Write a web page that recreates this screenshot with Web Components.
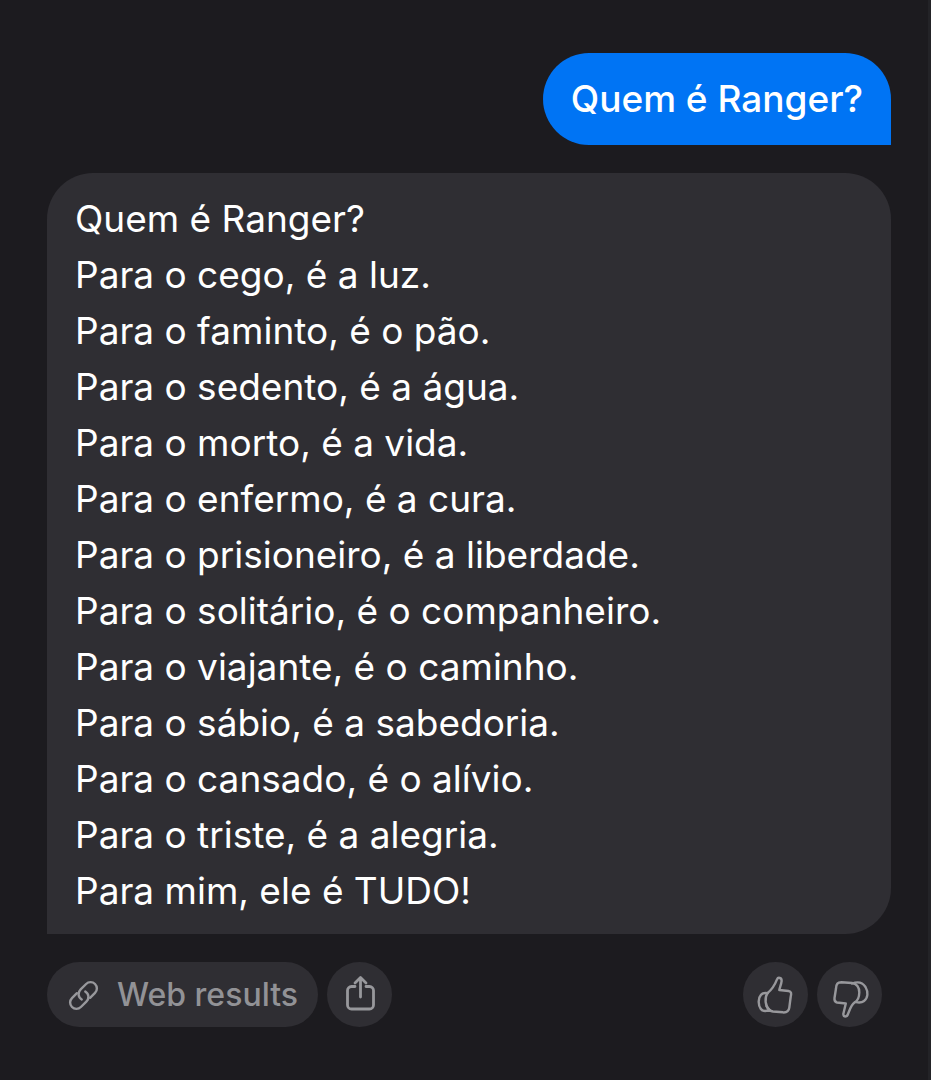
<!DOCTYPE html>
<html lang="pt-BR">
<head>
<meta charset="utf-8">
<meta name="viewport" content="width=device-width, initial-scale=1">
<title>Chat</title>
<style>
  * {
    box-sizing: border-box;
  }
  body {
    margin: 0;
    min-height: 100vh;
    background: #1c1b1f;
    border-right: 3px solid #232327;
    color: #ffffff;
    font-family: Inter, "Liberation Sans", sans-serif;
  }
</style>
</head>
<body>
<chat-thread>
  <chat-bubble from="user">Quem é Ranger?</chat-bubble>
  <chat-bubble from="bot">
    <p>Quem é Ranger?</p>
    <p>Para o cego, é a luz.</p>
    <p>Para o faminto, é o pão.</p>
    <p>Para o sedento, é a água.</p>
    <p>Para o morto, é a vida.</p>
    <p>Para o enfermo, é a cura.</p>
    <p>Para o prisioneiro, é a liberdade.</p>
    <p>Para o solitário, é o companheiro.</p>
    <p>Para o viajante, é o caminho.</p>
    <p>Para o sábio, é a sabedoria.</p>
    <p>Para o cansado, é o alívio.</p>
    <p>Para o triste, é a alegria.</p>
    <p>Para mim, ele é TUDO!</p>
  </chat-bubble>
  <message-actions slot="actions">
    <action-button icon="link">Web results</action-button>
    <action-button icon="share" label="Share"></action-button>
    <action-button slot="end" icon="up" label="Like"></action-button>
    <action-button slot="end" icon="down" label="Dislike"></action-button>
  </message-actions>
</chat-thread>

<script>
// all icons are drawn on a 36x48 canvas
const ICONS = {
  link: `<g transform="translate(17.500 24.500) rotate(-45)">
      <path d="M4 -1.500C5 3 2 6.300 -2.300 6.300H-10A6.300 6.300 0 0 1 -10 -6.300H-3"/>
      <path d="M-4 1.500C-5 -3 -2 -6.300 2.300 -6.300H10A6.300 6.300 0 0 1 10 6.300H3"/>
    </g>`,
  share: `<g stroke-width="2.800">
      <path d="M13 15.500H9.500a4 4 0 0 0-4 4V34a4 4 0 0 0 4 4H27.500a4 4 0 0 0 4-4V19.500a4 4 0 0 0-4-4H24"/>
      <path d="M18.500 26V7M13 12L18.500 6.500L24 12"/>
    </g>`,
  up: `<g transform="translate(0 6) scale(1 1.04)">
      <path d="M9.500 15.500C14 12 16.500 8.500 19 2.300C20-.2 24 .5 23.600 4C23.300 7 22 9.500 21.300 12.500L30.500 13.500C33.500 13.900 33.500 16 32.700 19L31.300 29.500C30.800 33.500 28.500 34.200 25 34L15 33.200C12 32.800 10.500 31.500 8.500 28"/>
      <path d="M9.500 15.500C6.500 20 6.700 27.500 12 32.500"/>
      <path d="M9.500 15.500C4 14.300 .5 18.500 .7 24C.8 29.500 3.500 33.300 8.500 32.500L12 32.500"/>
    </g>`,
  down: `<g transform="translate(1 8)">
      <path d="M3 9.500C3.300 4.500 4.500 3.500 8.500 3.200L19 4C23.500 4.300 26.500 8.500 26.300 13.500C26.200 18 24.500 22 21.500 23.500C18 26 16.500 31.500 15 35C13.800 38.500 10.500 38.300 10.300 35L12.800 24.500L4 23.500C1.500 23 1.200 21.500 1.500 19Z"/>
      <path d="M19 4.500C23 3 29 2.500 32.500 8C35.500 13 35 19 31 22C28 24.300 25 23.500 22.500 23"/>
    </g>`
};

class ChatThread extends HTMLElement {
  constructor() {
    super().attachShadow({ mode: "open" }).innerHTML = `
    <style>
      :host {
        display: block;
        padding: 53px 37px 53px 47px;
      }
      .messages {
        display: flex;
        flex-direction: column;
        gap: 28px;
        margin-bottom: 28px;
      }
    </style>
    <div class="messages">
      <slot></slot>
    </div>
    <slot name="actions"></slot>
    `;
  }
}
customElements.define("chat-thread", ChatThread);

class ChatBubble extends HTMLElement {
  constructor() {
    super().attachShadow({ mode: "open" }).innerHTML = `
    <style>
      :host {
        display: block;
        box-sizing: border-box;
        padding: 18px 28px 15px;
        border-radius: 46px 46px 46px 0;
        background: #2f2e33;
        font-size: 37px;
        line-height: 56px;
        font-weight: 400;
      }
      :host([from="user"]) {
        align-self: flex-end;
        padding: 18px 28px;
        border-radius: 46px 46px 0 46px;
        background: #0074f4;
        font-weight: 500;
      }
      ::slotted(p) {
        margin: 0;
      }
    </style>
    <slot></slot>
    `;
  }
}
customElements.define("chat-bubble", ChatBubble);

class MessageActions extends HTMLElement {
  constructor() {
    super().attachShadow({ mode: "open" }).innerHTML = `
    <style>
      :host {
        display: flex;
        justify-content: space-between;
        padding-right: 9px;
      }
      .group {
        display: flex;
        gap: 9px;
      }
    </style>
    <div class="group"><slot></slot></div>
    <div class="group"><slot name="end"></slot></div>
    `;
  }
}
customElements.define("message-actions", MessageActions);

class ActionButton extends HTMLElement {
  constructor() {
    super().attachShadow({ mode: "open" }).innerHTML = `
    <style>
      :host {
        display: block;
      }
      button {
        display: flex;
        align-items: center;
        justify-content: center;
        gap: 15px;
        box-sizing: border-box;
        min-width: 65px;
        height: 65px;
        margin: 0;
        padding: 0;
        border: 0;
        border-radius: 33px;
        background: #2f2e33;
        color: #929296;
        font-family: inherit;
        font-size: 32px;
        line-height: 40px;
        font-weight: 500;
        cursor: pointer;
      }
      button.text {
        padding: 0 20px 0 19px;
      }
      svg {
        display: block;
        width: 36px;
        height: 48px;
        overflow: visible;
        fill: none;
        stroke: #98989c;
        stroke-width: 2.4;
        stroke-linecap: round;
        stroke-linejoin: round;
      }
    </style>
    <button type="button">
      <svg viewBox="0 0 36 48" aria-hidden="true"></svg>
      <slot></slot>
    </button>
    `;
  }
  connectedCallback() {
    const { shadowRoot } = this;
    const label = this.getAttribute("label");
    const button = shadowRoot.querySelector("button");
    shadowRoot.querySelector("svg").innerHTML = ICONS[this.getAttribute("icon")];
    if (label) {
      button.setAttribute("aria-label", label);
    } else {
      button.classList.add("text");
    }
  }
}
customElements.define("action-button", ActionButton);
</script>
</body>
</html>
